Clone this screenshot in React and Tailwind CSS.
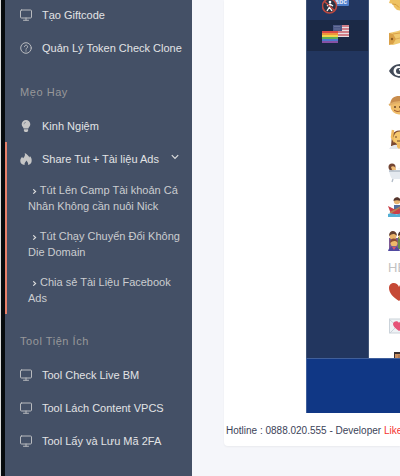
import React from "react";

function Monitor() {
  return (
    <svg viewBox="0 0 24 24" className="h-3 w-3 shrink-0" fill="none" stroke="#b9bbbf" strokeWidth="2" strokeLinejoin="round" strokeLinecap="round" aria-hidden="true">
      <rect x="1" y="2" width="22" height="16" rx="2" />
      <path d="M12 18v4M7 22.500h10" />
    </svg>
  );
}

function Question() {
  return (
    <svg viewBox="0 0 24 24" className="h-3 w-3 shrink-0" fill="none" stroke="#b9bbbf" strokeWidth="2" strokeLinecap="round" aria-hidden="true">
      <circle cx="12" cy="12" r="10.6" />
      <path d="M8.8 9.4a3.2 3.2 0 1 1 4.9 2.7c-1.2.8-1.7 1.2-1.7 2.4" />
      <path d="M12 17.6v.3" strokeWidth="2.4" />
    </svg>
  );
}

function Bulb() {
  return (
    <svg viewBox="0 0 24 24" className="h-3 w-3 shrink-0" fill="#c6c6c6" aria-hidden="true">
      <path d="M12 0a8.6 8.6 0 0 0-8.6 8.6c0 3.6 2.7 5.2 3.8 8.4h9.6c1.1-3.2 3.8-4.8 3.8-8.4A8.6 8.6 0 0 0 12 0z" />
      <path d="M7.8 18.5h8.4v3L14.5 24h-5l-1.7-2.5z" />
      <path d="M8 8.500A4 4 0 0 1 12 4.500" fill="none" stroke="#6b7384" strokeWidth="1.2" />
    </svg>
  );
}

function Flame() {
  return (
    <svg viewBox="0 0 24 24" className="h-3 w-3 shrink-0 overflow-visible" fill="#c6c6c6" aria-hidden="true">
      <path d="M9.5 0c5 3 8 5.600 9 9 .8-.6 1.200-1.600 1.300-2.800 3 3.400 4 6.600 3.500 10.300-.5 4-3.300 6.800-7.300 7.500 1.200-3-.6-6-3.200-9.200-1 3.200-4.800 4.800-3.600 9.200C4 23.500.5 20.500.5 16c0-4 2-6 4-8.300.3 1.500.8 2.300 1.800 2.900C9.500 7.500 10.600 4 9.500 0z" />
    </svg>
  );
}

function Chevron({ down }) {
  return (
    <svg viewBox="0 0 8 8" className={down ? "h-2 w-2 shrink-0" : "ml-1 inline h-[5px] w-[5px]"} fill="none" stroke="#dddddd" strokeWidth={down ? 1.2 : 1.8} aria-hidden="true">
      <path d={down ? "M.8 2.2 4 5.4l3.2-3.2" : "M2 .5 5.8 4 2 7.5"} />
    </svg>
  );
}

function NavLink({ icon, children, open }) {
  return (
    <a href="#" className="flex h-4 items-center gap-[10px] pr-[13px] text-[#e2e3e5]">
      {icon}
      <span className="whitespace-nowrap">{children}</span>
      {open && <span className="ml-auto self-start pt-[2px]"><span className="block"><Chevron down /></span></span>}
    </a>
  );
}

const tutorials = [
  "Tút Lên Camp Tài khoản Cá Nhân Không cần nuôi Nick",
  "Tút Chạy Chuyển Đổi Không Die Domain",
  "Chia sẻ Tài Liệu Facebook Ads",
];

function Heading({ children }) {
  return <h2 className="pl-[15px] tracking-wider text-[#98989a]">{children}</h2>;
}

function Sidebar() {
  return (
    <nav className="w-[192px] shrink-0 border-l border-[#dcdcdc]">
      <div className="h-full border-l-4 border-[#070b0e] bg-[#445066] pt-[7px] pb-6">
        <ul className="flex flex-col gap-[17px] pl-[15px]">
          <li><NavLink icon={<Monitor />}>Tạo Giftcode</NavLink></li>
          <li><NavLink icon={<Question />}>Quản Lý Token Check Clone</NavLink></li>
        </ul>
        <div className="pt-7"><Heading>Mẹo Hay</Heading></div>
        <ul className="flex flex-col gap-2 pt-[18px]">
          <li className="pl-[15px]"><NavLink icon={<Bulb />}>Kinh Ngiệm</NavLink></li>
          <li className="border-l-2 border-[#e8816b] pt-[9px] pb-2 pl-[13px]">
            <NavLink icon={<Flame />} open>Share Tut + Tài liệu Ads</NavLink>
            <ul className="flex flex-col gap-[14px] pt-[15px] pr-2 pl-2">
              {tutorials.map((title) => (
                <li key={title}>
                  <a href="#" className="block text-[#cbcdd0]"><Chevron /> {title}</a>
                </li>
              ))}
            </ul>
          </li>
        </ul>
        <div className="pt-[19px]"><Heading>Tool Tiện Ích</Heading></div>
        <ul className="flex flex-col gap-[17px] pt-[18px] pl-[15px]">
          <li><NavLink icon={<Monitor />}>Tool Check Live BM</NavLink></li>
          <li><NavLink icon={<Monitor />}>Tool Lách Content VPCS</NavLink></li>
          <li><NavLink icon={<Monitor />}>Tool Lấy và Lưu Mã 2FA</NavLink></li>
        </ul>
      </div>
    </nav>
  );
}

function Emoji({ children, short }) {
  return (
    <svg viewBox={short ? "0 8 20 12" : "0 0 20 20"} className={short ? "h-3 w-5 shrink-0" : "h-5 w-5 shrink-0"} aria-hidden="true">
      {children}
    </svg>
  );
}

const emojis = [
  <Emoji>
    <path d="M2 8h2V4h16v14l-3 1-8-1-3-3-1-3-4-1z" fill="#eec262" />
    <path d="M4 12l4 .5 3 3" stroke="#d39b3d" fill="none" />
  </Emoji>,
  <Emoji>
    <path d="M1 6 10 4l7-3 3 1v13l-8 1-7 2-4-1z" fill="#efc96f" />
    <path d="M1 6l4 1 3 5-3 5-4 1z" fill="#d9a047" />
    <path d="M5 7l7-1 8-2" stroke="#d9a047" fill="none" />
    <path d="M8 12 20 9" stroke="#dcab55" fill="none" />
    <circle cx="4" cy="12" r="1.2" fill="#8d5b22" />
  </Emoji>,
  <Emoji>
    <path d="M1 10C5 2 15 1 20 6v9c-6 3-14 3-19-5z" fill="#434b59" />
    <circle cx="10.5" cy="10" r="5" fill="#fff" />
    <circle cx="11" cy="10" r="3" fill="#434b59" />
    <circle cx="12" cy="8.8" r="1" fill="#fff" />
  </Emoji>,
  <Emoji>
    <circle cx="11" cy="11" r="8.500" fill="#efbc69" />
    <path d="M2 9C3 3 6 1 11 1s9 3 9 8C14 6 8 6 2 9z" fill="#c98d4d" />
    <path d="M1 10c6-3 13-4 19-1" stroke="#e1ae66" strokeWidth="2" fill="none" />
    <circle cx="7" cy="12" r="1" fill="#694526" /><circle cx="12" cy="12" r="1" fill="#694526" />
    <path d="M6 15c3 2 5 2 7 0" stroke="#9c562e" fill="none" />
  </Emoji>,
  <Emoji>
    <path d="M4 6c3-6 11-6 14 0l2 11H3z" fill="#7a4830" />
    <path d="M5 1 4 8l3 5M18 1l2 9" stroke="#efb95d" strokeWidth="2.5" fill="none" />
    <ellipse cx="11" cy="9" rx="5.5" ry="6.5" fill="#f5c76d" />
    <path d="M7 8h2m3 0h2m-5 4h4" stroke="#6c412b" fill="none" />
    <path d="M1 20c2-4 6-5 10-4 4-1 7 1 9 4z" fill="#e4e7ed" />
    <path d="M9 14h4v4l-2 2-2-2z" fill="#efba61" />
  </Emoji>,
  <Emoji>
    <circle cx="4" cy="4" r="3.5" fill="#734533" />
    <path d="M3 4c2-2 5 0 5 3H4z" fill="#efbd76" />
    <path d="M1 8h19l-2 8H5C3 16 2 12 1 8z" fill="#e4e9ef" />
    <path d="M1 8h19M5 16l-1 3" stroke="#b0bac6" strokeWidth="1.3" />
    <path d="M9 6l4-2 3 3z" fill="#eef3f8" />
  </Emoji>,
  <Emoji>
    <circle cx="9" cy="4" r="3.2" fill="#e8b673" />
    <path d="M5.500 4c0-5 7-5 7 0-2-1-5-1-7 0z" fill="#55352d" />
    <path d="M6 8h6l3 5H6z" fill="#536f9d" />
    <path d="M0 9l6 3h14v5H3z" fill="#c93f48" />
    <path d="M2 16 16 8" stroke="#b98352" strokeWidth="1.5" />
    <path d="M0 17c4-2 6 1 10 0s7-1 10 0v3H0z" fill="#54afd4" />
  </Emoji>,
  <Emoji>
    <path d="M1 7h9v12H1z" fill="#7e5a93" /><path d="M10 6h10v12H10z" fill="#648c4d" />
    <circle cx="5" cy="5" r="3.500" fill="#e8b26a" /><path d="M1 5c0-7 8-6 8 0-3-3-5-2-8 0z" fill="#634030" />
    <circle cx="14" cy="5" r="3.500" fill="#e8b26a" /><path d="M10 5c0-7 8-6 8 0-3-2-5-2-8 0z" fill="#4b342c" />
    <circle cx="6" cy="12" r="3.500" fill="#efb969" /><path d="M2 12c0-6 7-6 8 0-3-3-5-2-8 0z" fill="#8a4d34" />
    <path d="M0 20c1-6 11-6 12 0z" fill="#5149a0" /><path d="M4 16h4l-2 3z" fill="#d95469" />
    <circle cx="15" cy="13" r="3" fill="#efb969" /><path d="M12 20c1-6 7-5 8 0z" fill="#5149a0" />
  </Emoji>,
];

const hearts = [
  <Emoji>
    <path d="M11 19C5 15 1 11 1 6c0-6 8-7 10-1 2-6 10-5 10 1 0 5-4 9-10 13z" fill="#c64936" />
  </Emoji>,
  <Emoji>
    <rect x="1.5" y="3" width="22" height="14" fill="#eff2f5" stroke="#cbd3da" />
    <path d="m2 4 9 8 9-8M2 17l7-7" stroke="#cbd3da" fill="none" />
    <path d="M11 15c-4-3-6-5-6-7 0-3 5-4 6-1 1-3 6-2 6 1 0 2-2 4-6 7z" fill="#e65378" />
  </Emoji>,
];

function Categories() {
  return (
    <div className="w-[63px] shrink-0 border-x border-[#405477] bg-[#22365f]">
      <div className="flex h-5 items-start pl-[15px]">
        <svg viewBox="0 0 28 15" className="h-[15px] w-7" aria-label="Symbols">
          <rect x="11" y="-3" width="16" height="9" rx="1" fill="#4d7ecb" />
          <text x="13" y="4" fontSize="7" fontWeight="700" fill="#e3ecfb" fontFamily="Liberation Sans, sans-serif">abc</text>
          <circle cx="7.5" cy="6" r="7" fill="#293344" stroke="#bd4940" strokeWidth="1.6" />
          <circle cx="8" cy="2" r="1.3" fill="#fff" />
          <path d="M8 3.5 7.5 7l2.5 4M7.5 7 5 11M5 6l3-2 3 2" stroke="#fff" strokeWidth="1.4" fill="none" />
          <path d="m2.5 1.5 10 9" stroke="#bd4940" strokeWidth="1.6" />
        </svg>
      </div>
      <div className="flex h-[31px] items-start bg-[#1b2946] pt-[5px] pl-[15px]">
        <svg viewBox="0 0 27 18" className="h-[18px] w-[27px]" aria-label="Flags">
          <rect x="11" width="16" height="12" fill="#e8dfe3" />
          <path d="M11 1h16M11 4h16M11 7h16M11 10h16" stroke="#c7606c" strokeWidth="1.5" />
          <rect x="11" width="9" height="6" fill="#4c5785" />
          <path d="M12.5 1.5h6M12.5 4h6" stroke="#9ba3bf" strokeWidth=".7" strokeDasharray="1 1" />
          <path d="M0 6h16v2H0z" fill="#dd4c46" /><path d="M0 8h16v2H0z" fill="#ed963c" />
          <path d="M0 10h16v2H0z" fill="#f1d64b" /><path d="M0 12h16v2H0z" fill="#5eae59" />
          <path d="M0 14h16v2H0z" fill="#4e79cc" /><path d="M0 16h16v2H0z" fill="#8651a5" />
        </svg>
      </div>
    </div>
  );
}

function EmojiList() {
  return (
    <div className="h-[358px] min-w-0 flex-1 overflow-hidden bg-white pl-[19px]">
      <div className="flex h-5 items-start">{React.cloneElement(emojis[0], { short: true })}</div>
      {emojis.slice(1).map((emoji, i) => (
        <div key={i} className="flex h-[34px] items-center">{emoji}</div>
      ))}
      <h3 className="h-[17px] text-[13px] leading-5 text-[#c2c2c2]">HE</h3>
      {hearts.map((emoji, i) => (
        <div key={i} className="flex h-[34px] items-center">{emoji}</div>
      ))}
      <div className="pt-[9px]">
        <Emoji>
          <rect x="6" y="0" width="14" height="20" fill="#c98f62" />
          <path d="M6 0h14v2H6zM6 0h1v7H6z" fill="#3a302f" />
          <path d="M11 3v7" stroke="#9b6949" />
        </Emoji>
      </div>
    </div>
  );
}

export default function App() {
  return (
    <div className="flex min-h-screen bg-[#f5f6fa] font-['Liberation_Sans',Arial,sans-serif] text-[11px] leading-4">
      <Sidebar />
      <main className="min-w-0 flex-1 overflow-hidden pl-8">
        <section className="rounded-bl bg-white pb-[7px] shadow-xs">
          <div className="ml-[82px]">
            <div className="flex">
              <Categories />
              <EmojiList />
            </div>
            <div className="h-[55px] border-t border-l border-[#405f9b] bg-[#103785]" />
          </div>
          <p className="pt-[10px] pl-[2px] text-[10px] whitespace-nowrap text-[#3c4358]">
            Hotline : 0888.020.555 - Developer <a href="#" className="text-[#f5352f]">Like</a>
          </p>
        </section>
      </main>
    </div>
  );
}
